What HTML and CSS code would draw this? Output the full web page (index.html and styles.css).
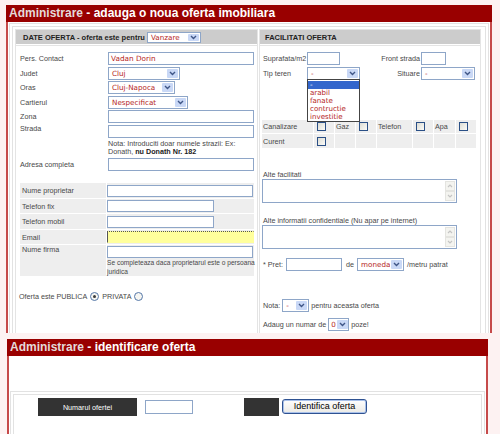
FILE: index.html
```html
<!DOCTYPE html>
<html>
<head>
<meta charset="utf-8">
<title>Administrare</title>
<link rel="stylesheet" href="styles.css">
</head>
<body>
<div class="panel p1">
  <div class="phead"><span class="adm">Administrare</span> - adauga o noua oferta imobiliara</div>
  <div class="pbody">
    <div class="frame">
      <div class="tbl">
        <div class="col lcol">
          <div class="colhead lh">DATE OFERTA - oferta este pentru
            <span class="sel w54 h11"><span class="sv">Vanzare</span><span class="sbtn"><svg width="7" height="5" viewBox="0 0 7 5"><path d="M1 1l2.5 2.5L6 1" fill="none" stroke="#3f5687" stroke-width="1.4"/></svg></span></span>
          </div>
          <div class="colbody lb">
            <div class="frow"><span class="lbl">Pers. Contact</span><span class="inp w146">Vadan Dorin</span></div>
            <div class="frow"><span class="lbl">Judet</span><span class="sel w72"><span class="sv">Cluj</span><span class="sbtn"><svg width="7" height="5" viewBox="0 0 7 5"><path d="M1 1l2.5 2.5L6 1" fill="none" stroke="#3f5687" stroke-width="1.4"/></svg></span></span></div>
            <div class="frow"><span class="lbl">Oras</span><span class="sel w67"><span class="sv">Cluj-Napoca</span><span class="sbtn"><svg width="7" height="5" viewBox="0 0 7 5"><path d="M1 1l2.5 2.5L6 1" fill="none" stroke="#3f5687" stroke-width="1.4"/></svg></span></span></div>
            <div class="frow"><span class="lbl">Cartierul</span><span class="sel w80"><span class="sv">Nespecificat</span><span class="sbtn"><svg width="7" height="5" viewBox="0 0 7 5"><path d="M1 1l2.5 2.5L6 1" fill="none" stroke="#3f5687" stroke-width="1.4"/></svg></span></span></div>
            <div class="frow"><span class="lbl">Zona</span><span class="inp w146"></span></div>
            <div class="frow top"><span class="lbl">Strada</span><span class="inp w146"></span></div>
            <div class="note">Nota: Introduciti doar numele strazii: Ex:<br>Donath, <b>nu Donath Nr. 182</b></div>
            <div class="frow"><span class="lbl">Adresa completa</span><span class="inp w146"></span></div>

            <div class="gblock">
              <div class="grow"><span class="glbl">Nume proprietar</span><span class="gfield"><span class="inp gi w146"></span></span></div>
              <div class="grow"><span class="glbl">Telefon fix</span><span class="gfield"><span class="inp gi w107"></span></span></div>
              <div class="grow"><span class="glbl">Telefon mobil</span><span class="gfield"><span class="inp gi w107"></span></span></div>
              <div class="grow"><span class="glbl">Email</span><span class="gfield"><span class="inp gi w147 email"></span></span></div>
              <div class="grow tall"><span class="glbl">Nume firma</span><span class="gfield"><span class="inp gi w146"></span><span class="small">Se completeaza daca proprietarul este o persoana juridica</span></span></div>
            </div>

            <div class="ofr">Oferta este PUBLICA <i class="radio on"></i> PRIVATA <i class="radio"></i></div>
          </div>
        </div>

        <div class="col rcol">
          <div class="colhead rh">FACILITATI OFERTA</div>
          <div class="colbody rb">
            <div class="frow"><span class="rl">Suprafata/m2</span><span class="inp w33"></span><span class="rr">Front strada</span><span class="inp w25"></span></div>
            <div class="frow"><span class="rl">Tip teren</span>
              <span class="sel w53 anchor"><span class="sv">-</span><span class="sbtn"><svg width="7" height="5" viewBox="0 0 7 5"><path d="M1 1l2.5 2.5L6 1" fill="none" stroke="#3f5687" stroke-width="1.4"/></svg></span>
                <span class="dd"><span class="ddi hi">-</span><span class="ddi">arabil</span><span class="ddi">fanate</span><span class="ddi">contructie</span><span class="ddi">investitie</span></span>
              </span>
              <span class="rr rr2">Situare</span><span class="sel w54"><span class="sv">-</span><span class="sbtn"><svg width="7" height="5" viewBox="0 0 7 5"><path d="M1 1l2.5 2.5L6 1" fill="none" stroke="#3f5687" stroke-width="1.4"/></svg></span></span>
            </div>

            <div class="fac">
              <span>Canalizare</span><span class="c"><i class="cb"></i></span><span>Gaz</span><span class="c"><i class="cb"></i></span><span>Telefon</span><span class="c"><i class="cb"></i></span><span>Apa</span><span class="c"><i class="cb"></i></span>
              <span>Curent</span><span class="c"><i class="cb"></i></span><span></span><span></span><span></span><span></span><span></span><span></span>
            </div>

            <div class="talbl first">Alte facilitati</div>
            <div class="ta"><span class="sbar"><span class="arr"><svg width="6" height="4" viewBox="0 0 6 4"><path d="M1 3l2-2 2 2" fill="none" stroke="#c4c4c4" stroke-width="1.2"/></svg></span><span class="arr"><svg width="6" height="4" viewBox="0 0 6 4"><path d="M1 1l2 2 2-2" fill="none" stroke="#c4c4c4" stroke-width="1.2"/></svg></span></span></div>
            <div class="talbl second">Alte informatii confidentiale (Nu apar pe internet)</div>
            <div class="ta"><span class="sbar"><span class="arr"><svg width="6" height="4" viewBox="0 0 6 4"><path d="M1 3l2-2 2 2" fill="none" stroke="#c4c4c4" stroke-width="1.2"/></svg></span><span class="arr"><svg width="6" height="4" viewBox="0 0 6 4"><path d="M1 1l2 2 2-2" fill="none" stroke="#c4c4c4" stroke-width="1.2"/></svg></span></span></div>

            <div class="frow pret"><span class="pl">* Pret:</span><span class="inp w56"></span><span class="de">de</span><span class="sel w47"><span class="sv">moneda</span><span class="sbtn"><svg width="7" height="5" viewBox="0 0 7 5"><path d="M1 1l2.5 2.5L6 1" fill="none" stroke="#3f5687" stroke-width="1.4"/></svg></span></span><span class="after">/metru patrat</span></div>
            <div class="frow nota"><span>Nota:</span><span class="sel w27 ml2"><span class="sv">-</span><span class="sbtn"><svg width="7" height="5" viewBox="0 0 7 5"><path d="M1 1l2.5 2.5L6 1" fill="none" stroke="#3f5687" stroke-width="1.4"/></svg></span></span><span class="after2">pentru aceasta oferta</span></div>
            <div class="frow poze"><span>Adaug un numar de</span><span class="sel w21 ml2"><span class="sv tiny">0</span><span class="sbtn"><svg width="7" height="5" viewBox="0 0 7 5"><path d="M1 1l2.5 2.5L6 1" fill="none" stroke="#3f5687" stroke-width="1.4"/></svg></span></span><span class="after2">poze!</span></div>
          </div>
        </div>
      </div>
    </div>
  </div>
</div>

<div class="panel p2">
  <div class="phead"><span class="adm">Administrare</span> - identificare oferta</div>
  <div class="pbody b2">
    <div class="frame f2">
      <div class="inner2">
        <span class="dark d1">Numarul ofertei</span>
        <span class="inp w48 nr"></span>
        <span class="dark d2"></span>
        <span class="btn">Identifica oferta</span>
      </div>
    </div>
  </div>
</div>
</body>
</html>
```
FILE: styles.css
```css
* { box-sizing: border-box; }
body {
  margin: 0;
  width: 500px;
  height: 434px;
  overflow: hidden;
  background: #fdf2f2;
  font-family: "Liberation Sans", Arial, sans-serif;
  font-size: 7.2px;
  color: #484848;
}

.panel { overflow: hidden; }
.p1 { margin: 5px 0 0 6px; width: 486px; height: 328px; }
.p2 { margin: 6px 0 0 7px; width: 481px; height: 95px; }

.phead {
  height: 17px;
  background: #990000;
  color: #fff;
  font: bold 12px/17px "Liberation Sans", Arial, sans-serif;
  padding-left: 3px;
  white-space: nowrap;
}
.adm { color: #e4dada; }

.pbody {
  background: #fff;
  border-left: 2px solid #c64a4a;
  border-right: 2px solid #c64a4a;
  height: 400px;
  padding-top: 1px;
}

.frame {
  margin: 0 1px;
  border: 1px solid #e2e2e2;
  padding: 2px 2px 0;
}

.tbl {
  border: 1px solid #e2e2e2;
  padding: 2px 4px 0 2px;
  display: flex;
  gap: 1px;
  height: 340px;
}

.col { border: 1px solid #e4e4e4; height: 330px; }
.lcol { width: 243px; }
.rcol { width: 222px; }

.colhead {
  height: 14px;
  background: #cccccc;
  font-weight: bold;
  font-size: 7.5px;
  color: #222;
  display: flex;
  align-items: center;
  white-space: nowrap;
}
.lh { padding-left: 7px; }
.lh .sel { margin-left: 2px; }
.rh { padding-left: 5px; }

.colbody {
  margin-top: 1px;
  border-top: 1px solid #e4e4e4;
  padding-top: 6px;
}
.lb { padding-left: 4px; }
.rb { padding-left: 3px; }

/* form rows */
.frow {
  display: flex;
  align-items: center;
  height: 13px;
  margin-bottom: 1.6px;
  white-space: nowrap;
}
.frow.top { align-items: flex-start; }
.frow.top .lbl { line-height: 8px; }
.lbl { width: 88px; flex: none; }

.inp {
  display: inline-block;
  flex: none;
  height: 13px;
  border: 1px solid #8ea6c8;
  background: #fff;
  font: 7.3px/11px "DejaVu Sans", Verdana, sans-serif;
  color: #b5261e;
  padding-left: 2px;
}
.w146 { width: 146px; }
.w147 { width: 147px; }
.w107 { width: 107px; }
.w33 { width: 33px; }
.w25 { width: 25px; }
.w56 { width: 56px; }
.w48 { width: 48px; }

.sel {
  display: inline-flex;
  flex: none;
  position: relative;
  height: 13px;
  border: 1px solid #8ea6c8;
  background: #fff;
  font: 7.2px "DejaVu Sans", Verdana, sans-serif;
  color: #b5261e;
}
.sel.h11 { height: 11px; }
.sv { flex: 1; padding-left: 3px; display: flex; align-items: center; overflow: hidden; }
.sv.tiny { padding-left: 2px; overflow: visible; }
.sbtn {
  width: 11px;
  flex: none;
  margin: 1px;
  background: #c9d8f6;
  border-radius: 1px;
  display: flex;
  align-items: center;
  justify-content: center;
}
.w54 { width: 54px; }
.w72 { width: 72px; }
.w67 { width: 67px; }
.w80 { width: 80px; }
.w53 { width: 53px; }
.w47 { width: 47px; }
.w27 { width: 27px; }
.w21 { width: 21px; }
.ml2 { margin-left: 2px; }

.note {
  margin-left: 88px;
  line-height: 8px;
  margin-bottom: 2.4px;
  white-space: nowrap;
}
.note b { color: #222; }

/* gray block */
.gblock { margin-top: 12.4px; width: 234px; }
.grow {
  display: flex;
  align-items: center;
  min-height: 14.5px;
  margin-bottom: 1px;
  background: #eeeeee;
}
.glbl { width: 86px; padding-left: 2px; flex: none; }
.gfield {
  border-left: 1px solid #fff;
  align-self: stretch;
  display: flex;
  flex-direction: column;
  justify-content: center;
}
.gi { height: 12px; }
.email {
  background: #ffff9c;
  border-color: #ffff9c;
  border-top: 1px dotted #555;
  border-left: 1px solid #555;
}
.grow.tall { align-items: flex-start; height: 31px; }
.grow.tall .glbl { padding-top: 1px; line-height: 8px; }
.grow.tall .gfield { justify-content: flex-start; padding-top: 1px; }
.small {
  font-size: 6.6px;
  line-height: 8.7px;
  padding-top: 1px;
  width: 148px;
}

.ofr {
  margin-top: 14px;
  margin-left: -1px;
  height: 13px;
  display: flex;
  align-items: center;
  white-space: nowrap;
}
.radio {
  width: 9px;
  height: 9px;
  border-radius: 50%;
  border: 1px solid #5577a8;
  background: #f6f6f2;
  margin: 0 3px 0 3px;
  display: inline-flex;
  align-items: center;
  justify-content: center;
}
.radio.on::after {
  content: "";
  width: 3px;
  height: 3px;
  border-radius: 50%;
  background: #3a3a3a;
}

/* right column */
.rl { width: 44px; flex: none; }
.rr { width: 81px; text-align: right; padding-right: 1px; flex: none; }
.rr.rr2 { width: 61px; }
.anchor { z-index: 2; }
.dd {
  position: absolute;
  top: 11px;
  left: -1px;
  width: 53px;
  height: 43px;
  background: #fff;
  border: 1px solid #444;
  padding-top: 1px;
  display: flex;
  flex-direction: column;
}
.ddi {
  height: 8.2px;
  line-height: 8.2px;
  padding-left: 2px;
  font-size: 7.1px;
  color: #b5261e;
}
.ddi.hi { background: #3366cc; color: #fff; }

.fac {
  display: grid;
  grid-template-columns: 51px 20px 20px 20px 35px 20px 21px 20px;
  grid-template-rows: 13px 14px;
  gap: 1px;
  margin: 40.8px 0 0 -1px;
}
.fac span {
  background: #eeeeee;
  display: flex;
  align-items: center;
  padding-left: 1px;
  white-space: nowrap;
}
.fac span.c { padding-left: 3px; }
.cb {
  width: 9px;
  height: 9px;
  border: 1px solid #2a4f86;
  background: linear-gradient(135deg, #dcdcd4, #fbfbf8);
}

.talbl { line-height: 8px; white-space: nowrap; }
.talbl.first { margin-top: 23px; }
.talbl.second { margin-top: 14px; }
.ta {
  width: 195px;
  height: 24px;
  margin-left: -1px;
  border: 1px solid #8ea6c8;
  background: #fff;
  display: flex;
  justify-content: flex-end;
  padding: 1px;
}
.sbar {
  width: 10px;
  display: flex;
  flex-direction: column;
  justify-content: space-between;
}
.arr {
  height: 10px;
  background: #f4f4f0;
  border: 1px solid #e4e4e0;
  display: flex;
  align-items: center;
  justify-content: center;
}

.frow.pret { margin-top: 8.4px; }
.pl { width: 23px; flex: none; }
.de { margin: 0 3px 0 4px; }
.after { margin-left: 3px; }
.after2 { margin-left: 2px; }
.frow.nota { margin-top: 28.4px; }
.frow.poze { margin-top: 5.4px; }

/* second panel */
.b2 { padding-top: 35px; }
.f2 { height: 100px; }
.inner2 {
  border: 1px solid #e2e2e2;
  height: 100px;
  padding: 3px 0 0 24px;
  display: flex;
  align-items: flex-start;
}
.dark {
  background: #333333;
  height: 18px;
  color: #fff;
  display: flex;
  align-items: center;
  justify-content: center;
  flex: none;
}
.d1 { width: 99px; }
.d2 { width: 35px; margin-left: 51px; }
.nr { margin: 2px 0 0 8px; height: 14px; }
.btn {
  margin: 1px 0 0 3px;
  width: 85px;
  height: 15px;
  border: 1px solid #2f5291;
  border-radius: 3px;
  box-shadow: inset 0 0 0 1px #a9c1ea;
  background: linear-gradient(#fefefe, #ebeae5);
  font: 9px/13px "Liberation Sans", Arial, sans-serif;
  color: #000;
  text-align: center;
}
```
